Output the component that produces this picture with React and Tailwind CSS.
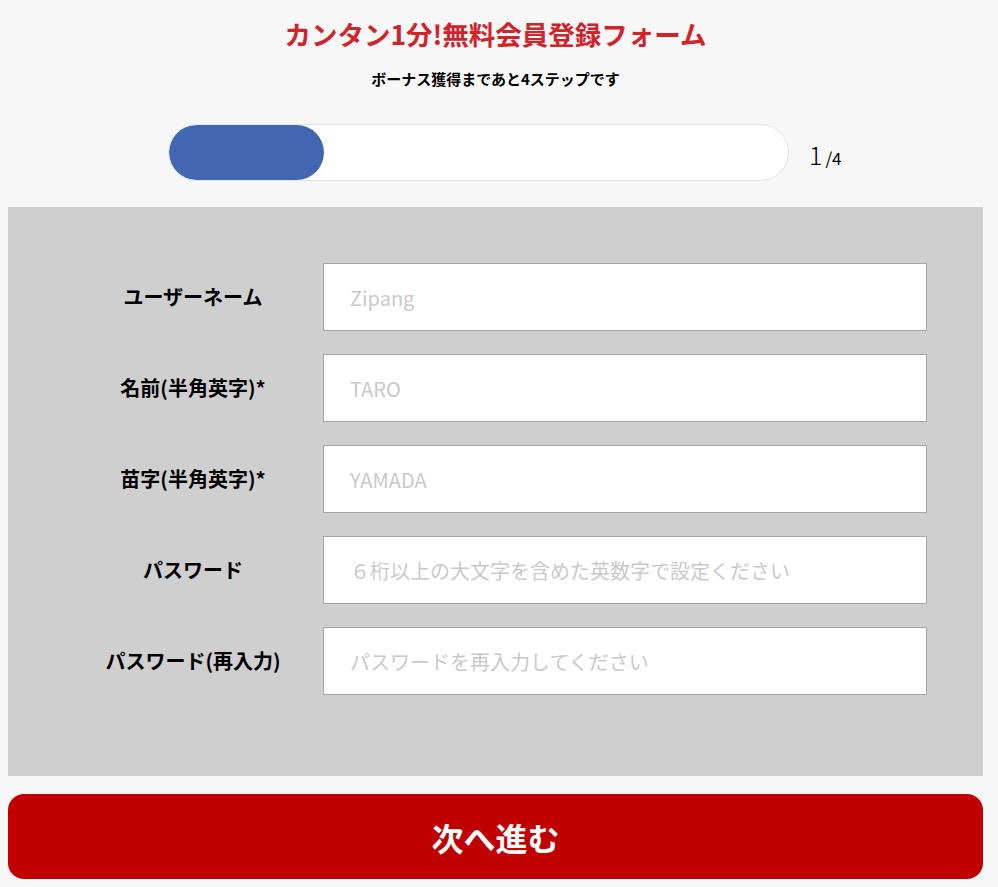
import React from "react";

const fields = [
  { label: "ユーザーネーム", placeholder: "Zipang" },
  { label: "名前(半角英字)*", placeholder: "TARO" },
  { label: "苗字(半角英字)*", placeholder: "YAMADA" },
  { label: "パスワード", placeholder: "６桁以上の大文字を含めた英数字で設定ください" },
  { label: "パスワード(再入力)", placeholder: "パスワードを再入力してください" },
];

export default function App() {
  const step = 1;
  const total = 4;

  return (
    <div className="min-h-[887px] w-full bg-[#f7f7f7] pl-2 pr-[15px] font-['Noto_Sans_CJK_JP',sans-serif] text-black">
      {/* Header */}
      <h1 className="pt-[16px] text-center text-[26.5px] font-bold leading-[36px] text-[#d0232a]">
        カンタン1分!無料会員登録フォーム
      </h1>
      <p className="mt-[18px] text-center text-[15px] font-bold leading-[18px]">
        ボーナス獲得まであと4ステップです
      </p>

      {/* Progress */}
      <div className="mt-[36px] flex items-center justify-center gap-5 pl-[46px]">
        <div className="h-[57px] w-[621px] overflow-hidden rounded-full border border-[#e3e3e3] bg-white">
          <div
            className="h-full rounded-full bg-[#4267b2]"
            style={{ width: `${(step / total) * 100}%` }}
          />
        </div>
        <div className="flex w-[60px] items-baseline pt-1">
          <span className="text-[25px] font-light leading-none">{step}</span>
          <span className="ml-[3px] text-[17px] leading-none">/{total}</span>
        </div>
      </div>

      {/* Form panel */}
      <div className="mt-[26px] flex flex-col gap-[23px] bg-[#cfcfcf] pb-[81px] pl-[55px] pt-[56px]">
        {fields.map((f) => (
          <div key={f.label} className="flex items-center">
            <label className="w-[260px] text-center text-[20px] font-bold leading-none">
              {f.label}
            </label>
            <input
              type="text"
              placeholder={f.placeholder}
              className="h-[68px] w-[604px] border border-[#a6a6a6] bg-white px-[26px] text-[20px] outline-none placeholder:text-[#c9c9c9]"
            />
          </div>
        ))}
      </div>

      {/* Next button */}
      <button className="mt-[18px] flex h-[85px] w-full items-center justify-center rounded-[16px] bg-[#c00000] text-[32px] font-bold text-white">
        次へ進む
      </button>
    </div>
  );
}
